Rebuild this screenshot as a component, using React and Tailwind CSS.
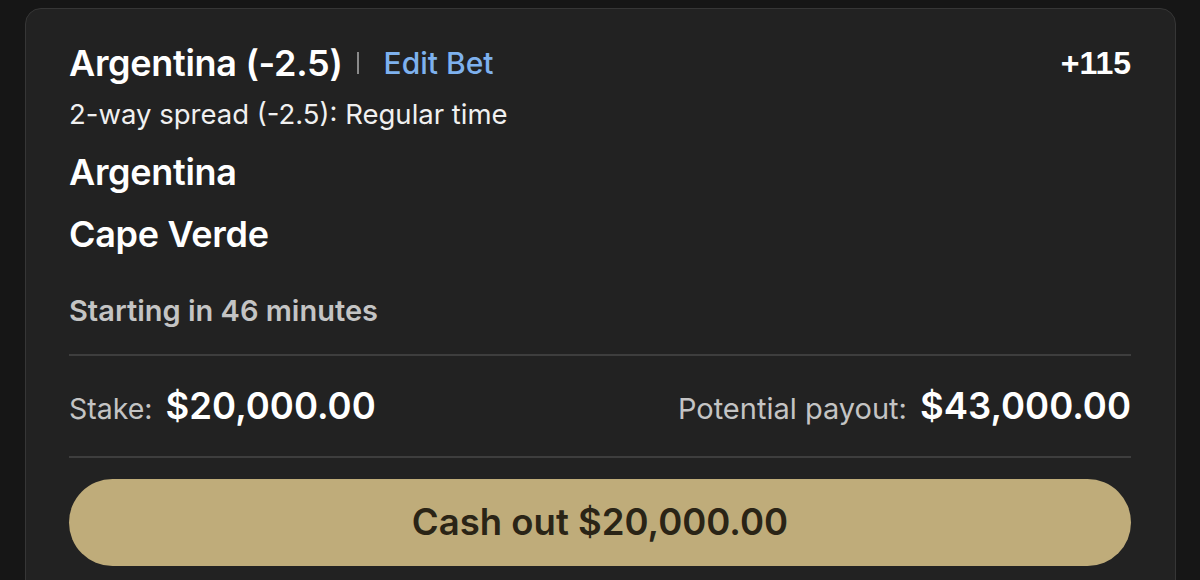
const inter = { fontFamily: 'Inter, Roboto, "Liberation Sans", sans-serif' };

export default function App() {
  return (
    <div className="w-[1200px] h-[580px] overflow-hidden bg-[#161616] pt-2 pl-[25px]" style={inter}>
      <div className="w-[1151px] h-[600px] rounded-2xl border border-[#363636] bg-[#222222] pt-8 pl-[43px] pr-[44px]">
        <div className="flex items-center justify-between h-11">
          <div className="flex items-center">
            <span className="text-[36px] font-semibold text-white leading-[44px] tracking-[-0.3px]">Argentina (-2.5)</span>
            <span className="ml-[14px] mr-[25px] h-[22px] w-[2px] bg-[#8a8a8a]" />
            <span className="text-[30px] font-medium text-[#7eb1ee] leading-[44px]">Edit Bet</span>
          </div>
          <span
            className="text-[32px] font-bold text-white leading-[44px]"
            style={{ fontFamily: '"Liberation Sans", Arial, sans-serif' }}
          >
            +115
          </span>
        </div>

        <p className="mt-3 text-[27.5px] leading-[34px] text-[#f0f0f0]">2-way spread (-2.5): Regular time</p>

        <p className="mt-[19px] text-[36px] font-semibold leading-[44px] text-white tracking-[-0.3px]">Argentina</p>
        <p className="mt-[18px] text-[36px] font-semibold leading-[44px] text-white tracking-[-0.3px]">Cape Verde</p>

        <p className="mt-[38px] text-[29px] font-semibold leading-[34px] text-[#c4c4c4]">Starting in 46 minutes</p>

        <div className="mt-[26px] h-[2px] bg-[#3e3e3e]" />

        <div className="mt-[28px] flex items-center justify-between h-11">
          <div className="flex items-baseline gap-[13px]">
            <span className="text-[28.5px] text-[#c4c4c4]">Stake:</span>
            <span className="text-[36.5px] font-semibold text-white">$20,000.00</span>
          </div>
          <div className="flex items-baseline gap-[13px]">
            <span className="text-[29px] text-[#c4c4c4]">Potential payout:</span>
            <span className="text-[36.5px] font-semibold text-white">$43,000.00</span>
          </div>
        </div>

        <div className="mt-[28px] h-[2px] bg-[#3e3e3e]" />

        <button className="mt-[21px] w-full h-[87px] rounded-full bg-[#bfac7a] flex items-center justify-center">
          <span className="text-[36.5px] font-semibold text-[#2a2416]">Cash out $20,000.00</span>
        </button>
      </div>
    </div>
  );
}
